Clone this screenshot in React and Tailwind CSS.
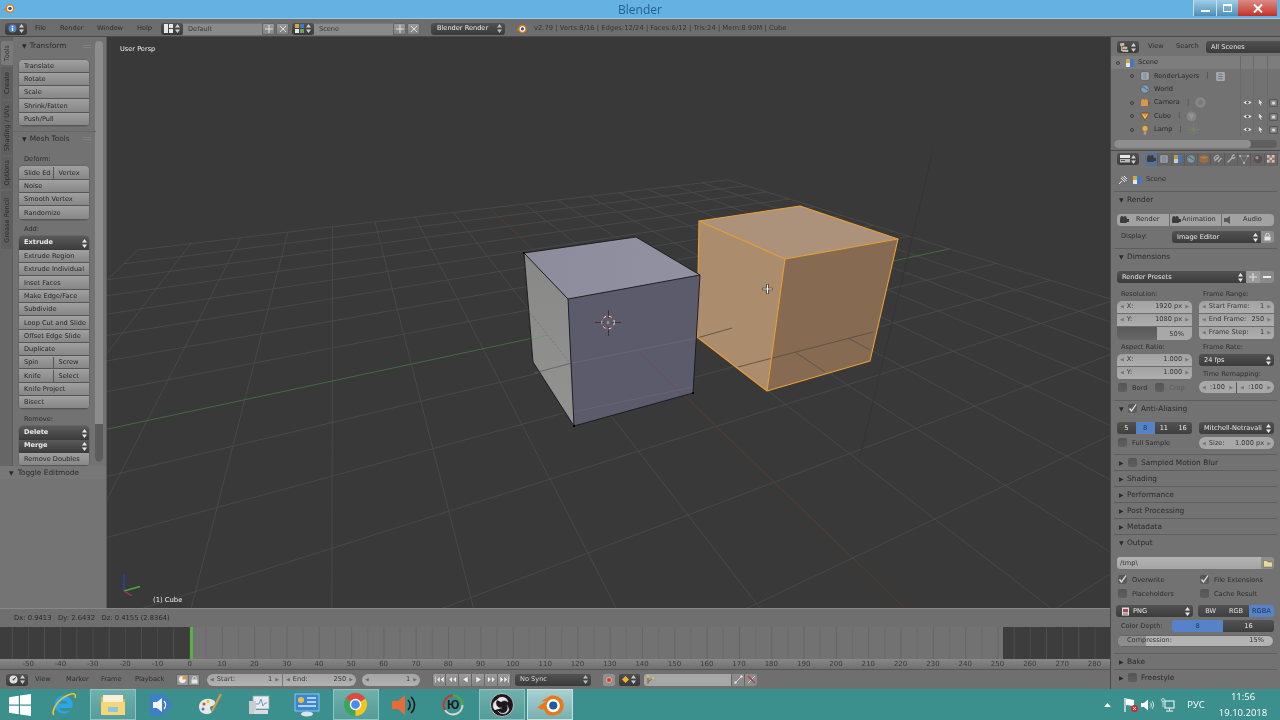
import React from "react";

const P = (u, v) => {
  const a = 0.0425 * u, b = 0.0942 * v, d = 1 + a + b;
  return [(608 + a * 1954 + b * 333) / d, (322 + a * 34 + b * 57) / d];
};
const range = [-8, -7, -6, -5, -4, -3, -2, -1, 0, 1, 2, 3, 4, 5, 6, 7, 8];
const uLine = (v) => { const s = Math.max(-8, (0.06 - 1 - 0.0942 * v) / 0.0425); return [P(s, v), P(8, v)]; };
const vLine = (u) => { const s = Math.max(-8, (0.06 - 1 - 0.0425 * u) / 0.0942); return [P(u, s), P(u, 8)]; };
const L = ({ l, c, w = 0.8 }) => <line x1={l[0][0]} y1={l[0][1]} x2={l[1][0]} y2={l[1][1]} stroke={c} strokeWidth={w} />;

function Grid({ color, w, axes }) {
  return (
    <g>
      {range.map((i) => (axes && i === 0 ? null : <L key={"v" + i} l={uLine(i)} c={color} w={w} />))}
      {range.map((i) => (axes && i === 0 ? null : <L key={"u" + i} l={vLine(i)} c={color} w={w} />))}
    </g>
  );
}

function Viewport() {
  return (
    <svg viewBox="107 37 1003 571" className="absolute inset-0 w-full h-full">
      <defs>
        <linearGradient id="gLeft" x1="0" y1="0" x2="0" y2="1"><stop offset="0" stopColor="#888887" /><stop offset="1" stopColor="#939392" /></linearGradient>
        <linearGradient id="gTop" x1="0" y1="0" x2="1" y2="0"><stop offset="0" stopColor="#8c8c9c" /><stop offset="1" stopColor="#9191a1" /></linearGradient>
      </defs>
      <Grid color="#4d4d4d" w={0.8} axes />
      <L l={[P(-8, 0), P(8, 0)]} c="#3f6d3f" w={1} />
      <L l={[P(0, -7.5), P(0, 8)]} c="#5a3b3b" w={1} />
      <line x1="933" y1="150" x2="860" y2="457" stroke="#333436" strokeWidth="0.9" />
      {/* selected cube */}
      <polygon points="699,221 785,259 767,391 697,337" fill="#ab8d6d" />
      <polygon points="785,259 898,239 870,361 767,391" fill="#866b52" />
      <polygon points="699,221 800,206 898,239 785,259" fill="#ad927b" />
      <g stroke="#5e5044" strokeWidth="0.9">
        <line x1="732" y1="328" x2="697" y2="338" />
        <line x1="873" y1="332" x2="738" y2="367" />
        <line x1="795" y1="352" x2="825" y2="372" />
        <line x1="848" y1="338" x2="870" y2="350" />
      </g>
      <g fill="none" stroke="#e9a035" strokeWidth="1.1" strokeLinejoin="round">
        <path d="M699 221 L800 206 L898 239 L785 259 Z" />
        <path d="M699 221 L697 337 L767 391 L870 361 L898 239" />
        <path d="M785 259 L767 391" />
      </g>
      {/* grey cube */}
      <polygon points="524,253 568,299 574,426 533,362" fill="url(#gLeft)" />
      <polygon points="568,299 700,275 693,393 574,426" fill="#5b5b6b" />
      <polygon points="524,253 636,237 700,275 568,299" fill="url(#gTop)" />
      <g strokeWidth="0.8">
        <line x1="534" y1="373" x2="572" y2="363" stroke="#5e5e5e" />
        <line x1="572" y1="363" x2="697" y2="338" stroke="#6a6a78" />
        <line x1="573" y1="412" x2="693" y2="387" stroke="#676775" />
        <line x1="640" y1="353" x2="680" y2="393" stroke="#6a4c58" />
        <line x1="530" y1="313" x2="570" y2="363" stroke="#6f6f6f" strokeDasharray="2 2" />
        <line x1="531" y1="340" x2="547" y2="335" stroke="#6d8f6d" />
      </g>
      <g fill="none" stroke="#17171c" strokeWidth="0.9" strokeLinejoin="round">
        <path d="M524 253 L636 237 L700 275 L568 299 Z" />
        <path d="M524 253 L533 362 L574 426 L693 393 L700 275" />
        <path d="M568 299 L574 426" />
      </g>
      <rect x="523" y="252" width="2" height="2" fill="#000" />
      <rect x="573" y="425" width="2" height="2" fill="#000" />
      <rect x="692" y="392" width="2" height="2" fill="#000" />
      {/* 3D cursor */}
      <g>
        <path d="M595 322.5 H604 M612 322.5 H621 M608.5 310 V318 M608.5 327 V336" stroke="#33333a" strokeWidth="1" />
        <circle cx="608" cy="322.5" r="6.3" fill="none" stroke="#f0e8ea" strokeWidth="1" strokeDasharray="3 3" />
        <circle cx="608" cy="322.5" r="6.3" fill="none" stroke="#b34a4a" strokeWidth="1" strokeDasharray="3 3" strokeDashoffset="3" />
        <rect x="607" y="321" width="2" height="3" fill="#a89078" />
      </g>
      {/* mouse pointer */}
      <path d="M767.5 284 V294 M762.5 289 H772.5" stroke="#3a2e22" strokeWidth="2.6" />
      <path d="M767.5 284.5 V293.5 M763 289 H772" stroke="#ffffff" strokeWidth="1.2" />
      {/* axis widget */}
      <path d="M124 591 V574" stroke="#2a3fc0" strokeWidth="1.3" />
      <path d="M124 591 L140 586.5" stroke="#4fa83a" strokeWidth="1.6" />
      <path d="M124 591 L132 596" stroke="#a83a3a" strokeWidth="1.4" />
    </svg>
  );
}

const Spin = ({ c = "#e8e8e8" }) => (
  <svg width="5" height="9" viewBox="0 0 5 9" className="shrink-0"><path d="M2.5 0 L5 3.4 H0 Z M2.5 9 L5 5.6 H0 Z" fill={c} /></svg>
);
const BlenderLogo = ({ s = 12 }) => (
  <svg width={s} height={s} viewBox="0 0 24 24" className="shrink-0">
    <path d="M1 15 L8 9.5 L4 9.5 L12 4 C18 3 23 7 23 13 C23 19 18 22 13 22 C9 22 6 19.500 6 16.500 L3.500 16.500 Z" fill="#e87d0d" />
    <circle cx="14" cy="13" r="6" fill="#ffffff" />
    <circle cx="14" cy="13" r="3.600" fill="#24588f" />
  </svg>
);

const IconBtn = ({ children, w = "w-[22px]" }) => (
  <div className={`${w} h-[12px] rounded-[3px] bg-linear-to-b from-[#525252] to-[#3a3a3a] flex items-center justify-center gap-[1.5px] shrink-0`}>
    {children}<Spin c="#cfcfcf" />
  </div>
);

const Plus = () => <svg width="8" height="8" viewBox="0 0 8 8"><path d="M4 0 V8 M0 4 H8" stroke="#dedede" strokeWidth="1.1" /></svg>;
const Cross = () => <svg width="8" height="8" viewBox="0 0 8 8"><path d="M1 1 L7 7 M7 1 L1 7" stroke="#dedede" strokeWidth="1" /></svg>;
const SmallBtn = ({ children, className = "w-[13px]" }) => (
  <div className={`${className} h-[12px] rounded-[2px] bg-linear-to-b from-[#9a9a9a] to-[#828282] border border-[#666666] flex items-center justify-center shrink-0`}>{children}</div>
);

function TitleBar() {
  return (
    <div className="h-[19px] bg-[#64b1e2] flex relative shrink-0 border-b border-[#9cc9e6]">
      <div className="pl-[3px] pt-[2px]"><BlenderLogo s={12} /></div>
      <div className="flex-1 text-center text-[#22618f] text-[12px] leading-[19px] [font-family:'Open_Sans',sans-serif] pr-[15px]">Blender</div>
      <div className="absolute right-[3px] top-0 flex h-[16px]">
        <div className="w-[23px] bg-linear-to-b from-[#9fcfe8] to-[#4d8db8] flex items-center justify-center border-l border-[#c5dff0]"><div className="w-[9px] h-[2px] mt-[5px] bg-white" /></div>
        <div className="w-[22px] bg-linear-to-b from-[#9fcfe8] to-[#4d8db8] flex items-center justify-center border-l border-[#c5dff0]"><div className="w-[9px] h-[8px] border border-white border-t-2" /></div>
        <div className="w-[39px] bg-linear-to-b from-[#d98a85] to-[#c42b22] flex items-center justify-center"><svg width="10" height="9" viewBox="0 0 10 9"><path d="M1 0.500 L9 8.500 M9 0.500 L1 8.500" stroke="#ffffff" strokeWidth="2" /></svg></div>
      </div>
    </div>
  );
}

function TopHeader() {
  return (
    <div className="h-[18px] bg-[#6d6d6d] flex items-center pt-[2px] text-[6.6px] text-[#2b2b2b] shrink-0 border-b border-[#4a4a4a]">
      <div className="ml-[5px]"><IconBtn><svg width="9" height="9" viewBox="0 0 9 9"><circle cx="4.5" cy="4.5" r="4" fill="#4f86d0" /><rect x="3.800" y="3.500" width="1.400" height="3.500" fill="#fff" /><rect x="3.800" y="1.800" width="1.400" height="1.200" fill="#fff" /></svg></IconBtn></div>
      <span className="ml-[8px] w-[25px]">File</span>
      <span className="w-[37px]">Render</span>
      <span className="w-[40px]">Window</span>
      <span className="w-[24px]">Help</span>
      <IconBtn><svg width="9" height="9" viewBox="0 0 9 9"><path d="M0 0 H4 V9 H0 Z M5 0 H9 V4 H5 Z M5 5 H9 V9 H5 Z" fill="#e8e8e8" /></svg></IconBtn>
      <div className="w-[79px] h-[12px] bg-[#8a8a8a] border-t border-[#777777] text-[#3a3a3a] pl-[5px] leading-[11px]">Default</div>
      <div className="flex gap-[1px]"><SmallBtn><Plus /></SmallBtn><SmallBtn><Cross /></SmallBtn></div>
      <div className="ml-[3px]"><IconBtn><svg width="9" height="9" viewBox="0 0 9 9"><rect x="0" y="5" width="4" height="4" fill="#e8e8e8" /><rect x="5" y="0" width="4" height="4" fill="#3f78c8" /><rect x="0" y="0" width="4" height="4" fill="#d2a640" /><rect x="5" y="5" width="4" height="4" fill="#6aa060" /></svg></IconBtn></div>
      <div className="w-[79px] h-[12px] bg-[#8a8a8a] border-t border-[#777777] text-[#3a3a3a] pl-[5px] leading-[11px]">Scene</div>
      <div className="flex gap-[1px]"><SmallBtn><Plus /></SmallBtn><SmallBtn><Cross /></SmallBtn></div>
      <div className="ml-[11px] w-[74px] h-[12px] rounded-[3px] bg-linear-to-b from-[#525252] to-[#3a3a3a] text-[#ececec] flex items-center justify-between pl-[6px] pr-[3px]">Blender Render<Spin c="#bdbdbd" /></div>
      <div className="ml-[11px]"><BlenderLogo s={11} /></div>
      <span className="ml-[7px] text-[6.8px] text-[#343434] whitespace-nowrap">v2.79 | Verts:8/16 | Edges:12/24 | Faces:6/12 | Tris:24 | Mem:8.90M | Cube</span>
    </div>
  );
}

const btnRow = "h-[13.3px] pt-px bg-linear-to-b from-[#a0a0a0] to-[#878787] border-b border-[#565656] text-[#262626] flex items-center leading-none";
function Group({ rows }) {
  return (
    <div className="w-[70px] rounded-[4px] overflow-hidden shadow-[0_0_0_0.5px_#5a5a5a]">
      {rows.map((r, i) => {
        if (Array.isArray(r)) {
          return (
            <div key={i} className={btnRow}>
              <span className="w-[34.500px] pl-[5px] border-r border-[#565656] h-full flex items-center">{r[0]}</span>
              <span className="pl-[5px]">{r[1]}</span>
            </div>
          );
        }
        if (r.startsWith("*")) {
          return (
            <div key={i} className="h-[13.3px] pt-px bg-linear-to-b from-[#5a5a5a] to-[#3e3e3e] border-b border-[#3a3a3a] text-[#ececec] font-bold flex items-center justify-between pl-[5px] pr-[2px]">
              {r.slice(1)}<Spin />
            </div>
          );
        }
        return <div key={i} className={`${btnRow} pl-[5px] whitespace-nowrap`}>{r}</div>;
      })}
    </div>
  );
}

const Grip = () => <div className="w-[8px] h-[3px] border-y border-[#808080]" />;
const Dots = () => <div className="w-[8px] h-[5px] bg-[radial-gradient(#909090_35%,transparent_40%)] bg-[length:2px_2px] shrink-0" />;

const TLabel = ({ children, className = "" }) => <div className={`h-[13px] flex items-center text-[#2c2c2c] pl-[5px] ${className}`}>{children}</div>;

function PanelTitle({ title, className }) {
  return (
    <div className={`h-[14px] flex items-center justify-between pl-[9px] pr-[5px] w-[83px] text-[7.4px] text-[#2a2a2a] ${className}`}>
      <span className="flex items-center gap-[3px]"><span className="text-[6px]">▼</span>{title}</span>
      <Grip />
    </div>
  );
}

function VTab({ children, h, active, className = "" }) {
  return (
    <div className={`w-[12px] ${h} ${active ? "bg-[#7a7a7a] text-[#333333]" : "bg-[#5f5f5f] text-[#2a2a2a]"} rounded-l-[2px] flex items-center justify-center overflow-hidden ${className}`}>
      <span className="[writing-mode:vertical-rl] rotate-180 whitespace-nowrap text-[6.6px] leading-none">{children}</span>
    </div>
  );
}

function Toolbar() {
  return (
    <div className="w-[106px] shrink-0 bg-[#727272] flex flex-col text-[6.6px]">
      <div className="h-[429px] flex overflow-hidden shrink-0">
        <div className="w-[13px] shrink-0 bg-[#666666] flex flex-col gap-[2px] pt-[4px] pl-[1px] border-r border-[#5c5c5c]">
          <VTab h="h-[24px]" active>Tools</VTab>
          <VTab h="h-[32px]">Create</VTab>
          <VTab h="h-[54px]">Shading / UVs</VTab>
          <VTab h="h-[32px]">Options</VTab>
          <VTab h="h-[58px]">Grease Pencil</VTab>
        </div>
        <div className="w-[82px] shrink-0 relative">
          <PanelTitle title="Transform" className="mt-[2px]" />
          <div className="ml-[6px] mt-[6.5px]"><Group rows={["Translate", "Rotate", "Scale", "Shrink/Fatten", "Push/Pull"]} /></div>
          <PanelTitle title="Mesh Tools" className="mt-[5px] border-t border-[#666666]" />
          <div className="ml-[6px] mt-[8.5px]">
            <TLabel>Deform:</TLabel>
            <Group rows={[["Slide Ed", "Vertex"], "Noise", "Smooth Vertex", "Randomize"]} />
            <TLabel className="mt-[3.8px]">Add:</TLabel>
            <Group rows={["*Extrude", "Extrude Region", "Extrude Individual", "Inset Faces", "Make Edge/Face", "Subdivide", "Loop Cut and Slide", "Offset Edge Slide", "Duplicate", ["Spin", "Screw"], ["Knife", "Select"], "Knife Project", "Bisect"]} />
            <TLabel className="mt-[4.1px]">Remove:</TLabel>
            <Group rows={["*Delete", "*Merge", "Remove Doubles"]} />
          </div>
        </div>
        <div className="w-[8px] mt-[4px] mb-[4px] ml-[0px] rounded-full bg-[#8d8d8d] flex flex-col justify-end overflow-hidden shrink-0">
          <div className="h-[38px] bg-[#5d5d5d] rounded-b-full" />
        </div>
      </div>
      <div className="h-[13px] flex items-center justify-between pl-[9px] pr-[7px] text-[7.4px] text-[#2a2a2a] bg-[#777777] shrink-0">
        <span className="flex items-center gap-[4px]"><span className="text-[6px]">▼</span>Toggle Editmode</span>
        <Dots />
      </div>
      <div className="flex-1 bg-[#747474]" />
    </div>
  );
}

const Ticks = () => {
  const xs = [];
  for (let f = -55; f <= 285; f += 5) xs.push(f);
  return (
    <svg viewBox="0 0 1110 32" className="absolute inset-0 w-full h-full">
      {xs.map((f) => {
        const x = 190 + f * 3.232;
        return <line key={f} x1={x} x2={x} y1="0" y2="32" stroke={f % 10 === 0 ? "#5a5a5a" : "#666666"} strokeOpacity="0.5" strokeWidth="1" />;
      })}
    </svg>
  );
};

const labels = [];
for (let f = -50; f <= 280; f += 10) labels.push(f);

const Fld = ({ children, w, className = "" }) => (
  <div className={`${w} h-[12px] bg-linear-to-b from-[#a4a4a4] to-[#b2b2b2] flex items-center justify-between px-[3px] text-[#3a3a3a] shrink-0 ${className}`}>
    <span className="text-[#6e6e6e] text-[5px]">◀</span>{children}<span className="text-[#6e6e6e] text-[5px]">▶</span>
  </div>
);

const Tr = ({ d }) => (
  <div className="w-[13px] h-[12px] bg-linear-to-b from-[#9b9b9b] to-[#858585] border-r border-[#666666] flex items-center justify-center">
    <svg width="9" height="7" viewBox="0 0 9 7"><path d={d} fill="#eeeeee" stroke="#555555" strokeWidth="0.4" /></svg>
  </div>
);

function TimelineHeader() {
  return (
    <div className="h-[19px] bg-[#6f6f6f] flex items-center text-[6.6px] text-[#2c2c2c]">
      <div className="ml-[6px]"><IconBtn><svg width="9" height="9" viewBox="0 0 9 9"><circle cx="4.500" cy="4.500" r="4" fill="#e0e0e0" /><path d="M4.500 4.500 L7 2.500" stroke="#333" strokeWidth="1" /><circle cx="4.500" cy="4.500" r="1" fill="#555" /></svg></IconBtn></div>
      <span className="ml-[6px] w-[34px] pl-[1px]">View</span>
      <span className="w-[36px] ml-[-3px] pl-[1px]">Marker</span>
      <span className="w-[34px]">Frame</span>
      <span className="w-[38px]">Playback</span>
      <div className="ml-[3px] flex">
        <div className="w-[13px] h-[12px] rounded-l-[2px] bg-[#9a9a9a] border border-[#666666] flex items-center justify-center"><svg width="9" height="9" viewBox="0 0 9 9"><circle cx="4.500" cy="4.500" r="4" fill="#f2f2f2" stroke="#666" strokeWidth="0.5" /><path d="M4.500 4.500 V0.500 A4 4 0 0 1 8.500 4.500 Z" fill="#e09a3a" /></svg></div>
        <div className="w-[11px] h-[12px] rounded-r-[2px] bg-[#949494] border-y border-r border-[#666666] flex items-center justify-center"><svg width="7" height="8" viewBox="0 0 7 8"><rect x="0.500" y="3.500" width="6" height="4" fill="#e6e6e6" /><path d="M1.800 3.500 V2 A1.700 1.700 0 0 1 5.200 2 V3.500" fill="none" stroke="#e6e6e6" strokeWidth="0.9" /></svg></div>
      </div>
      <div className="ml-[7px] flex">
        <Fld w="w-[76px]" className="rounded-l-full border-r border-[#777777]"><span className="flex-1 flex justify-between px-[3px]"><span>Start:</span><span>1</span></span></Fld>
        <Fld w="w-[73px]" className="rounded-r-full"><span className="flex-1 flex justify-between px-[3px]"><span>End:</span><span>250</span></span></Fld>
      </div>
      <Fld w="w-[58px]" className="ml-[6px] rounded-full"><span className="flex-1 text-right pr-[3px]">1</span></Fld>
      <div className="ml-[12px] flex rounded-[2px] overflow-hidden border-l border-[#666666]">
        <Tr d="M0 0 H1.500 V7 H0 Z M5 0 V7 L1.800 3.500 Z M9 0 V7 L5.500 3.500 Z" />
        <Tr d="M4.500 0 V7 L1 3.500 Z M8.500 0 V7 L5 3.500 Z" />
        <Tr d="M7 0 V7 L1.500 3.500 Z" />
        <Tr d="M2 0 V7 L7.500 3.500 Z" />
        <Tr d="M0.500 0 V7 L4 3.500 Z M4.500 0 V7 L8 3.500 Z" />
        <Tr d="M0 0 V7 L3.500 3.500 Z M4 0 V7 L7.500 3.500 Z M7.500 0 H9 V7 H7.500 Z" />
      </div>
      <div className="ml-[4px] w-[76px] h-[12px] rounded-[3px] bg-linear-to-b from-[#525252] to-[#3a3a3a] text-[#d8d8d8] flex items-center justify-between pl-[5px] pr-[3px]">No Sync<Spin c="#bdbdbd" /></div>
      <div className="ml-[12px] w-[12px] h-[12px] rounded-[2px] bg-[#8f8f8f] flex items-center justify-center"><div className="w-[6px] h-[6px] rounded-full bg-[#c8402a] border border-[#eeb0a0]" /></div>
      <div className="ml-[4px] w-[21px] h-[12px] rounded-[2px] bg-linear-to-b from-[#4e4e4e] to-[#383838] flex items-center justify-center gap-[3px]"><div className="w-[5px] h-[5px] rotate-45 bg-[#efb42e]" /><Spin c="#cfcfcf" /></div>
      <div className="ml-[4px] w-[87px] h-[12px] bg-[#a6a6a6] rounded-l-[3px] flex items-center pl-[2px]"><svg width="9" height="10" viewBox="0 0 9 10"><path d="M2 1 V9 M2 7 L7 3" stroke="#7a6a20" strokeWidth="1" fill="none" /><circle cx="2" cy="1.500" r="1.200" fill="#d8c860" /><circle cx="7" cy="3" r="1.200" fill="#d8c860" /></svg></div>
      <div className="w-[13px] h-[12px] bg-[#8b8b8b] border-l border-[#666666] flex items-center justify-center"><svg width="9" height="9" viewBox="0 0 9 9"><path d="M1 8 L8 1" stroke="#e2e2e2" strokeWidth="0.8" /><circle cx="1.500" cy="7.500" r="1.200" fill="#e2e2e2" /><circle cx="7.500" cy="1.500" r="1.200" fill="#e2e2e2" /></svg></div>
      <div className="w-[13px] h-[12px] bg-[#8b8b8b] rounded-r-[3px] border-l border-[#666666] flex items-center justify-center"><svg width="9" height="9" viewBox="0 0 9 9"><path d="M1 8 L8 1" stroke="#e2e2e2" strokeWidth="0.8" /><path d="M1 1 L8 8" stroke="#b83a3a" strokeWidth="1.100" /></svg></div>
    </div>
  );
}

function Timeline() {
  return (
    <>
      <div className="h-[32px] flex relative shrink-0">
        <div className="w-[190px] bg-[#3d3d3d]" />
        <div className="w-[813px] bg-[#727272]" />
        <div className="flex-1 bg-[#3d3d3d]" />
        <Ticks />
        <div className="absolute left-[189.500px] top-0 w-[3px] h-full bg-[#57b33f]" />
      </div>
      <div className="h-[11px] bg-linear-to-b from-[#888888] to-[#6f6f6f] border-b border-[#565656] flex items-center text-[7px] text-[#3a3a3a] overflow-hidden shrink-0 pl-[12px]">
        {labels.map((f) => <div key={f} className="w-[32.32px] text-center shrink-0">{f}</div>)}
      </div>
      <TimelineHeader />
    </>
  );
}

const Ico = ({ children, s = 10 }) => <svg width={s} height={s} viewBox="0 0 10 10" className="shrink-0">{children}</svg>;
const SceneIco = () => <Ico><rect x="1" y="5" width="4" height="4" fill="#e6e6e6" /><rect x="5" y="1" width="4" height="4" fill="#3f78c8" /><rect x="1" y="1" width="4" height="4" fill="#d2a640" /><rect x="5" y="5" width="4" height="4" fill="#3f78c8" /></Ico>;
const LayersIco = () => <Ico><rect x="1" y="1" width="8" height="8" rx="1" fill="#bcbcbc" stroke="#555" strokeWidth="0.6" /><path d="M2.500 3 H7.500 M2.500 5 H7.500 M2.500 7 H7.500" stroke="#4f6f98" strokeWidth="0.9" /></Ico>;
const WorldIco = () => <Ico><circle cx="5" cy="5" r="4.200" fill="#7f9fb8" stroke="#444" strokeWidth="0.5" /><path d="M2 4 Q4 2 5 4 T8 6" stroke="#4e6e5e" strokeWidth="1" fill="none" /></Ico>;
const CamIco = ({ g, d }) => {
  const c = d ? "#3c3c3c" : g ? "#8a8a8a" : "#d89a48";
  return <Ico><rect x="1" y="3" width="7" height="5" rx="1" fill={c} /><circle cx="3" cy="2.500" r="1.600" fill={c} /><circle cx="6" cy="2.500" r="1.600" fill={c} /><rect x="8" y="4" width="2" height="3" fill={g || d ? c : "#8a5a28"} /></Ico>;
};
const CubeIco = () => <Ico><path d="M0.500 2 H9.500 L5 9.500 Z" fill="#d8913a" stroke="#6b4518" strokeWidth="0.6" /><path d="M3 3.500 L5 7 L7 3.500" stroke="#f4dcae" strokeWidth="0.7" fill="none" /></Ico>;
const LampIco = () => <Ico><circle cx="5" cy="3.500" r="3" fill="#e2b050" stroke="#7a5a20" strokeWidth="0.5" /><rect x="3.800" y="6.500" width="2.400" height="3" fill="#aaa39a" /></Ico>;
const GhostIco = ({ children }) => <svg width="11" height="11" viewBox="0 0 10 10" className="shrink-0 opacity-70">{children}</svg>;
const Eye = () => <Ico s={9}><path d="M0.500 5 Q5 1 9.500 5 Q5 9 0.500 5 Z" fill="#e8e8e8" /><circle cx="5" cy="5" r="1.500" fill="#444" /></Ico>;
const Cursor = () => <Ico s={9}><path d="M3 1 L8 6 L5.500 6 L6.500 9 L5 9 L4 6.500 L3 8 Z" fill="#e6e6e6" stroke="#444" strokeWidth="0.4" /></Ico>;
const Rnd = () => <Ico s={9}><rect x="1" y="2" width="8" height="7" fill="#8f8f8f" stroke="#333" strokeWidth="0.7" /><circle cx="5" cy="5.500" r="1.700" fill="#dddddd" /></Ico>;

function ORow({ level, icon, text, extra, vis, active }) {
  return (
    <div className={`h-[13.4px] flex ${active ? "bg-[#7d7d7d]" : ""}`}>
      <div className="w-[129px] flex items-center shrink-0">
        <div className={`${level ? "ml-[19px]" : "ml-[5px]"} w-[4px] h-[4px] rounded-full border border-[#3c3c3c] shrink-0`} />
        <div className={level ? "ml-[6px]" : "ml-[5px]"}>{icon}</div>
        <span className={`pt-px ${level ? "ml-[4px]" : "ml-[3px]"} ${active ? "text-[#262626]" : "text-[#2a2a2a]"}`}>{text}</span>
        {extra && <><span className="ml-[7px] text-[#444444]">|</span><span className="ml-[6px]">{extra}</span></>}
      </div>
      {[0, 1, 2].map((i) => (
        <div key={i} className="w-[13.400px] border-l border-[#6a6a6a] flex items-center justify-center">
          {vis && (i === 0 ? <Eye /> : i === 1 ? <Cursor /> : <Rnd />)}
        </div>
      ))}
    </div>
  );
}

function Outliner() {
  return (
    <div className="bg-[#727272]">
      <div className="h-[19px] pt-[1px] flex items-center text-[6.6px] text-[#2c2c2c] relative">
        <div className="ml-[6px]"><IconBtn><svg width="9" height="9" viewBox="0 0 9 9"><path d="M0.500 0.500 H4 V2.500 H0.500 Z M3 4 H7 V5.500 H3 Z M3 7 H8 V8.500 H3 Z M1.500 2.500 V8 H3 M1.500 5 H3" fill="#d8a860" stroke="#e8e8e8" strokeWidth="0.5" /></svg></IconBtn></div>
        <span className="ml-[9px] w-[28px]">View</span>
        <span className="w-[20px]">Search</span>
        <div className="ml-[10px] flex-1 h-[12px] rounded-l-[3px] bg-linear-to-b from-[#505050] to-[#3c3c3c] text-[#e8e8e8] pl-[5px] leading-[12px]">All Scenes</div>
      </div>
      <div className="h-[81px] text-[6.6px]">
        <ORow level={0} active icon={<SceneIco />} text="Scene" />
        <ORow level={1} icon={<LayersIco />} text="RenderLayers" extra={<GhostIco><rect x="1" y="1" width="8" height="8" rx="1" fill="#c0c0c0" /><path d="M3 3 H7 M3 5 H7 M3 7 H7" stroke="#5878a0" /></GhostIco>} />
        <div className="h-[13.4px] flex"><div className="w-[129px] flex items-center"><div className="ml-[29px]"><WorldIco /></div><span className="pt-px ml-[4px] text-[#2a2a2a]">World</span></div>{[0, 1, 2].map((i) => <div key={i} className="w-[13.400px] border-l border-[#6a6a6a]" />)}</div>
        <ORow level={1} icon={<CamIco />} text="Camera" vis extra={<GhostIco><circle cx="5" cy="5" r="4" fill="#8a8a8a" stroke="#9a9a9a" /><circle cx="5" cy="5" r="1.800" fill="#7a7a7a" /></GhostIco>} />
        <ORow level={1} icon={<CubeIco />} text="Cube" vis extra={<GhostIco><circle cx="5" cy="5" r="4.500" fill="#8e8e8e" /><path d="M2.500 3 H7.500 L5 8 Z" fill="#a5a5a5" /></GhostIco>} />
        <ORow level={1} icon={<LampIco />} text="Lamp" vis extra={<GhostIco><circle cx="5" cy="5" r="2" fill="#7f8a5a" /><path d="M5 0 V2 M5 8 V10 M0 5 H2 M8 5 H10 M1.500 1.500 L3 3 M7 7 L8.500 8.500 M8.500 1.500 L7 3 M3 7 L1.500 8.500" stroke="#80906a" strokeWidth="0.8" /></GhostIco>} />
      </div>
      <div className="h-[13px] flex items-center justify-center">
        <div className="w-[163px] h-[8px] rounded-full bg-[#5f5f5f] overflow-hidden"><div className="w-[137px] h-full rounded-full bg-[#8e8e8e]" /></div>
      </div>
    </div>
  );
}

const H = ({ children, active }) => (
  <div className={`w-[13.3px] h-[13px] flex items-center justify-center shrink-0 ${active ? "bg-[#53739a]" : "bg-[#666666]"} border-r border-[#5c5c5c]`}><div className={active ? "" : "opacity-80"}>{children}</div></div>
);

function PropsHeader() {
  return (
    <div className="h-[17px] flex items-center bg-[#727272] border-t border-[#4a4a4a] shrink-0">
      <div className="ml-[6px]"><IconBtn><svg width="10" height="8" viewBox="0 0 10 8"><rect x="0" y="0" width="10" height="3" fill="#e8e8e8" /><rect x="0" y="4" width="10" height="3.500" fill="#b8b8b8" /><rect x="1" y="5" width="4" height="1" fill="#555" /></svg></IconBtn></div>
      <div className="ml-[6px] flex rounded-[2px] overflow-hidden">
        <H active><CamIco d /></H>
        <H><LayersIco /></H>
        <H><SceneIco /></H>
        <H><WorldIco /></H>
        <H><Ico><path d="M5 0.500 L9.500 2.800 V7.400 L5 9.600 L0.500 7.400 V2.800 Z" fill="#a87038" /><path d="M0.500 2.800 L5 5 L9.500 2.800" fill="#c28a50" /></Ico></H>
        <H><Ico><path d="M1.500 7 L5 3 M5 8 L8.500 4" stroke="#bdbdbd" strokeWidth="1.200" fill="none" /><rect x="1" y="2" width="5" height="3" rx="1.500" fill="none" stroke="#bdbdbd" transform="rotate(-40 3.500 3.500)" /></Ico></H>
        <H><Ico><path d="M1.500 8.500 L6 4 M8.500 1 A2.500 2.500 0 0 0 6 4 A2 2 0 0 0 9 3" stroke="#c8c8c8" strokeWidth="1.300" fill="none" /></Ico></H>
        <H><Ico><path d="M1 2 H9 L5 9 Z" fill="none" stroke="#9a9a9a" strokeWidth="0.800" /><circle cx="1" cy="2" r="0.900" fill="#d8d8d8" /><circle cx="9" cy="2" r="0.900" fill="#d8d8d8" /><circle cx="5" cy="9" r="0.900" fill="#d8d8d8" /></Ico></H>
        <H><Ico><circle cx="5" cy="5" r="4" fill="#5b4a48" /><circle cx="4" cy="3.800" r="1.700" fill="#a79a98" /></Ico></H>
        <H><Ico><rect x="1" y="1" width="8" height="8" fill="#ab7c6a" /><path d="M1 1 H3.500 V3.500 H1 Z M6 1 H8.500 V3.500 H6 Z M3.500 3.500 H6 V6 H3.500 Z M1 6 H3.500 V8.500 H1 Z M6 6 H8.500 V8.500 H6 Z" fill="#e4d8d2" /></Ico></H>
      </div>
    </div>
  );
}

const Tri = ({ open }) => <span className="text-[6px] text-[#2a2a2a] w-[8px] shrink-0">{open ? "▼" : "▶"}</span>;
const Check = ({ on }) => (
  <div className="w-[9px] h-[9px] rounded-[2px] bg-linear-to-b from-[#555555] to-[#5f5f5f] flex items-center justify-center shrink-0">
    {on && <svg width="9" height="9" viewBox="0 0 9 9"><path d="M1.500 4.500 L3.500 7 L8 0.500" stroke="#e8e8e8" strokeWidth="1.300" fill="none" /></svg>}
  </div>
);

function PTitle({ title, open, check, on }) {
  return (
    <div className="mx-[3px] h-[16px] border-t border-[#5e5e5e] flex items-center pl-[5px] pr-[3px] text-[7.4px] text-[#2a2a2a] shrink-0">
      <Tri open={open} />
      {check && <span className="mr-[4px] ml-[1px]"><Check on={on} /></span>}
      <span className="flex-1">{title}</span>
      <Dots />
    </div>
  );
}

const Dark = ({ children, className = "" }) => (
  <div className={`h-[12px] rounded-[3px] bg-linear-to-b from-[#525252] to-[#3c3c3c] text-[#e8e8e8] flex items-center justify-between pl-[5px] pr-[3px] ${className}`}><span className="pt-px">{children}</span><Spin /></div>
);
const NumRow = ({ l, v, className = "" }) => (
  <div className={`h-[13px] pt-px bg-linear-to-b from-[#a2a2a2] to-[#aeaeae] border-b border-[#6c6c6c] flex items-center justify-between px-[3px] text-[#363636] ${className}`}>
    <span className="text-[#777777] text-[5px]">◀</span>
    <span className="flex-1 flex justify-between px-[3px] whitespace-nowrap"><span>{l}</span><span>{v}</span></span>
    <span className="text-[#777777] text-[5px]">▶</span>
  </div>
);
const FLabel = ({ children, className = "" }) => <div className={`h-[12px] pt-px flex items-center pl-[4px] text-[#2e2e2e] ${className}`}>{children}</div>;
const CheckLabel = ({ on, children, dim }) => (
  <div className={`flex items-center gap-[5px] ${dim ? "text-[#5c5c5c]" : "text-[#2c2c2c]"}`}><Check on={on} /><span className="pt-px">{children}</span></div>
);

function Properties() {
  return (
    <div className="flex-1 bg-[#727272] text-[6.6px] text-[#2c2c2c] flex flex-col overflow-hidden">
      <div className="h-[24px] flex items-center pl-[7px] pt-[2px] shrink-0">
        <Ico><path d="M1 9 L4 6 M3 3 L7 7 M4 1.500 L8.500 6 M6 1 L9 4" stroke="#e6e6e6" strokeWidth="1" /></Ico>
        <span className="ml-[4px]"><SceneIco /></span>
        <span className="ml-[1px] pl-[3px] text-[#2e2e2e]">Scene</span>
      </div>

      <PTitle title="Render" open />
      <div className="h-[41px] px-[6px] shrink-0">
        <div className="mt-[7px] h-[12px] flex rounded-[4px] overflow-hidden bg-[#a2a2a2] text-[#2a2a2a]">
          <div className="w-[53px] flex items-center pl-[2px] border-r border-[#6c6c6c]"><CamIco d /><span className="ml-[7px]">Render</span></div>
          <div className="w-[52px] flex items-center pl-[1px] border-r border-[#6c6c6c]"><CamIco d /><span className="ml-[1px]">Animation</span></div>
          <div className="flex-1 flex items-center pl-[1px]"><Ico><path d="M1 3 H4 L7 1 V9 L4 7 H1 Z" fill="#5a5a5a" /></Ico><span className="ml-[10px]">Audio</span></div>
        </div>
        <div className="mt-[5px] h-[12px] flex items-center">
          <span className="w-[55px] pl-[4px] text-[#2e2e2e]">Display:</span>
          <Dark className="w-[89px] rounded-r-none">Image Editor</Dark>
          <div className="flex-1 h-[12px] bg-[#8d8d8d] rounded-r-[3px] flex items-center justify-center"><svg width="7" height="8" viewBox="0 0 7 8"><rect x="0.500" y="3.500" width="6" height="4" fill="#e6e6e6" /><path d="M1.800 3.500 V2 A1.700 1.700 0 0 1 5.200 2 V3.500" fill="none" stroke="#e6e6e6" strokeWidth="0.9" /></svg></div>
        </div>
      </div>

      <PTitle title="Dimensions" open />
      <div className="h-[136px] px-[6px] shrink-0">
        <div className="mt-[7px] h-[12px] flex">
          <Dark className="w-[129px] rounded-r-none">Render Presets</Dark>
          <div className="w-[14px] bg-[#9a9a9a] flex items-center justify-center"><Plus /></div>
          <div className="flex-1 bg-[#8a8a8a] rounded-r-[3px] flex items-center justify-center"><div className="w-[8px] h-[1.500px] bg-[#ececec]" /></div>
        </div>
        <div className="mt-[5px] flex justify-between">
          <div className="w-[75px]">
            <FLabel>Resolution:</FLabel>
            <div className="mt-[0.5px] rounded-[5px] overflow-hidden">
              <NumRow l="X:" v="1920 px" />
              <NumRow l="Y:" v="1080 px" />
              <div className="h-[13px] flex text-[#363636]"><div className="w-[40px] bg-linear-to-b from-[#5a5a5a] to-[#686868]" /><div className="flex-1 bg-[#a8a8a8] text-right pr-[8px] leading-[14px]">50%</div></div>
            </div>
            <FLabel className="mt-[1.5px]">Aspect Ratio:</FLabel>
            <div className="mt-[0.5px] rounded-[5px] overflow-hidden">
              <NumRow l="X:" v="1.000" />
              <NumRow l="Y:" v="1.000" />
            </div>
            <div className="mt-[2.5px] h-[12px] flex items-center gap-[8px] pl-[1px]">
              <CheckLabel>Bord</CheckLabel>
              <CheckLabel dim>Crop</CheckLabel>
            </div>
          </div>
          <div className="w-[75px]">
            <FLabel>Frame Range:</FLabel>
            <div className="mt-[0.5px] rounded-[5px] overflow-hidden">
              <NumRow l="Start Frame:" v="1" />
              <NumRow l="End Frame:" v="250" />
              <NumRow l="Frame Step:" v="1" />
            </div>
            <FLabel className="mt-[1.5px]">Frame Rate:</FLabel>
            <Dark className="mt-[1px]">24 fps</Dark>
            <FLabel className="mt-[2px]">Time Remapping:</FLabel>
            <div className="mt-[1px] h-[12px] pt-px flex rounded-full overflow-hidden bg-[#a8a8a8] text-[#363636]">
              <div className="flex-1 flex items-center justify-between px-[3px] border-r border-[#555555]"><span className="text-[#777777] text-[5px]">◀</span>:100<span className="text-[#777777] text-[5px]">▶</span></div>
              <div className="flex-1 flex items-center justify-between px-[3px]"><span className="text-[#777777] text-[5px]">◀</span>:100<span className="text-[#777777] text-[5px]">▶</span></div>
            </div>
          </div>
        </div>
      </div>

      <PTitle title="Anti-Aliasing" open check on />
      <div className="h-[38px] px-[6px] shrink-0">
        <div className="mt-[6px] h-[12px] flex justify-between">
          <div className="w-[75px] grid grid-cols-4 rounded-[3px] overflow-hidden text-center leading-[13px]">
            <div className="bg-linear-to-b from-[#525252] to-[#3e3e3e] text-[#e8e8e8]">5</div>
            <div className="bg-[#5682c8] text-[#1f2f55]">8</div>
            <div className="bg-linear-to-b from-[#525252] to-[#3e3e3e] text-[#e8e8e8]">11</div>
            <div className="bg-linear-to-b from-[#525252] to-[#3e3e3e] text-[#e8e8e8]">16</div>
          </div>
          <Dark className="w-[75px] whitespace-nowrap pl-[5px]">Mitchell-Netravali</Dark>
        </div>
        <div className="mt-[3px] h-[12px] flex justify-between items-center">
          <div className="w-[75px] pl-[1px]"><CheckLabel>Full Sample</CheckLabel></div>
          <div className="w-[75px] h-[12px] pt-px rounded-full bg-[#a8a8a8] flex items-center justify-between px-[3px] text-[#363636]"><span className="text-[#777777] text-[5px]">◀</span><span className="flex-1 flex justify-between px-[3px]"><span>Size:</span><span>1.000 px</span></span><span className="text-[#777777] text-[5px]">▶</span></div>
        </div>
      </div>

      <PTitle title="Sampled Motion Blur" check />
      <PTitle title="Shading" />
      <PTitle title="Performance" />
      <PTitle title="Post Processing" />
      <PTitle title="Metadata" />
      <PTitle title="Output" open />
      <div className="h-[103px] px-[6px] shrink-0">
        <div className="mt-[7px] h-[12px] flex">
          <div className="flex-1 bg-linear-to-b from-[#b4b4b4] to-[#a4a4a4] rounded-l-[3px] pl-[3px] leading-[13px] text-[#2e2e2e]">/tmp\</div>
          <div className="w-[13px] bg-[#8f8f8f] rounded-r-[3px] flex items-center justify-center"><svg width="10" height="9" viewBox="0 0 10 9"><path d="M0.500 8 V1.500 H4 L5 3 H9.500 V8 Z" fill="#e6d8a0" stroke="#6a6030" strokeWidth="0.5" /></svg></div>
        </div>
        <div className="mt-[5px] h-[12px] flex items-center pl-[1px]"><div className="w-[82px]"><CheckLabel on>Overwrite</CheckLabel></div><CheckLabel on>File Extensions</CheckLabel></div>
        <div className="mt-[2px] h-[12px] flex items-center pl-[1px]"><div className="w-[82px]"><CheckLabel>Placeholders</CheckLabel></div><CheckLabel>Cache Result</CheckLabel></div>
        <div className="mt-[5px] h-[12px] flex justify-between">
          <Dark className="w-[77px] -ml-[1px] pl-[3px]"><span className="flex items-center gap-[3px]"><svg width="9" height="9" viewBox="0 0 9 9"><rect x="1" y="0.500" width="7" height="8" fill="#e8e0e0" /><rect x="2" y="2" width="5" height="3" fill="#b04a5a" /><path d="M2 6 H7 M2 7.300 H7" stroke="#555" strokeWidth="0.6" /></svg>PNG</span></Dark>
          <div className="w-[76px] grid grid-cols-3 rounded-[3px] overflow-hidden text-center leading-[13px] text-[#e0e0e0]">
            <div className="bg-linear-to-b from-[#525252] to-[#3e3e3e]">BW</div>
            <div className="bg-linear-to-b from-[#525252] to-[#3e3e3e]">RGB</div>
            <div className="bg-[#5682c8] text-[#1f2f55]">RGBA</div>
          </div>
        </div>
        <div className="mt-[3px] h-[12px] flex items-center">
          <span className="w-[55px] pl-[4px] pt-px text-[#2e2e2e]">Color Depth:</span>
          <div className="flex-1 h-[12px] flex rounded-[3px] overflow-hidden text-center leading-[13px]">
            <div className="w-[51px] bg-[#5682c8] text-[#1f2f55]">8</div>
            <div className="flex-1 bg-linear-to-b from-[#525252] to-[#3e3e3e] text-[#e8e8e8]">16</div>
          </div>
        </div>
        <div className="mt-[2.5px] h-[12px] rounded-full overflow-hidden flex relative bg-[#b4b4b4] border border-[#666666]">
          <div className="w-[28px] bg-[#8c8c8c]" />
          <div className="absolute inset-0 pt-px flex items-center justify-between pl-[9px] pr-[9px] text-[#363636]"><span>Compression:</span><span>15%</span></div>
        </div>
      </div>
      <PTitle title="Bake" />
      <PTitle title="Freestyle" check />
    </div>
  );
}

function RightCol() {
  return (
    <div className="w-[170px] shrink-0 border-l border-[#4a4a4a] flex flex-col bg-[#727272]">
      <Outliner />
      <PropsHeader />
      <Properties />
    </div>
  );
}

const Slot = ({ children, active, strong }) => (
  <div className={`w-[48.6px] h-full shrink-0 flex items-center justify-center ${active ? "px-[1.4px]" : ""}`}>
    <div className={`w-full h-full flex items-center justify-center ${strong ? "bg-linear-to-b from-[#a9d0d0] to-[#78b0b0] border border-[#c4e0e0]" : active ? "bg-linear-to-b from-[#6fb0ae] to-[#559c9a] border border-[#8cc4c2]" : ""}`}>{children}</div>
  </div>
);

function Taskbar() {
  return (
    <div className="h-[31px] bg-[#3b8f8c] flex items-stretch shrink-0 text-white [font-family:'Open_Sans',sans-serif]">
      <div className="w-[40px] shrink-0 flex items-center justify-center">
        <svg width="22" height="22" viewBox="0 0 22 22"><path d="M0 3.200 L9.800 1.800 V10.500 H0 Z M11 1.600 L22 0 V10.500 H11 Z M0 11.700 H9.800 V20.200 L0 18.800 Z M11 11.700 H22 V22 L11 20.400 Z" fill="#ffffff" /></svg>
      </div>
      <Slot><svg width="26" height="26" viewBox="0 0 26 26"><path d="M7 16 H21 A9 9 0 1 0 19 19 H15 A5 5 0 0 1 8 16 Z M8 11.500 A5 5 0 0 1 17 11.500 Z" fill="#2ba6e8" fillRule="evenodd" /><path d="M3 23 C0 20 6 6 20 2 C24 1 25 3 24 6" fill="none" stroke="#f2c230" strokeWidth="1.500" /></svg></Slot>
      <Slot active><svg width="26" height="24" viewBox="0 0 26 24"><path d="M1 4 H10 L12 6 H25 V22 H1 Z" fill="#e4b64a" /><rect x="3" y="2" width="20" height="7" fill="#f6f0d8" /><rect x="1" y="9" width="24" height="13" fill="#f5d77a" /><rect x="8" y="14" width="10" height="5" fill="#8dc6e2" /></svg></Slot>
      <Slot><svg width="26" height="24" viewBox="0 0 26 24"><path d="M2 1 H15 L25 12 L15 23 H2 Z" fill="#3f7fc6" /><path d="M5 9 H9 L14 5 V19 L9 15 H5 Z" fill="#f2f6fa" /><path d="M16 8 A6 6 0 0 1 16 16" fill="none" stroke="#f2f6fa" strokeWidth="1.300" /></svg></Slot>
      <Slot><svg width="26" height="26" viewBox="0 0 26 26"><path d="M2 15 C2 8 10 5 16 8 C20 10 18 14 15 14 C12 14 13 18 15 20 C11 24 2 22 2 15 Z" fill="#e9e9e4" /><circle cx="7" cy="12" r="1.500" fill="#d84a3a" /><circle cx="11" cy="9.500" r="1.500" fill="#e8c030" /><circle cx="6" cy="17" r="1.500" fill="#3a7ad8" /><path d="M15 19 L24 2" stroke="#d89a50" strokeWidth="2.200" /></svg></Slot>
      <Slot><svg width="26" height="24" viewBox="0 0 26 24"><rect x="7" y="3" width="16" height="13" fill="#e8ecee" stroke="#9aa0a4" strokeWidth="0.800" /><path d="M9 11 L13 11 L15 6 L17 13 L19 10 L21 10" stroke="#5a88b8" fill="none" strokeWidth="0.800" /><rect x="3" y="8" width="7" height="13" fill="#c9cdcf" /><rect x="8" y="17" width="14" height="4" fill="#dadddf" /></svg></Slot>
      <Slot><svg width="26" height="24" viewBox="0 0 26 24"><rect x="1" y="1" width="24" height="17" fill="#3a86d6" stroke="#a8d0f0" strokeWidth="0.800" /><circle cx="7" cy="7" r="3" fill="#f0c040" /><path d="M13 5 H22 M13 9 H22 M4 13 H22" stroke="#dcecfa" strokeWidth="1.600" /><ellipse cx="13" cy="21" rx="6" ry="2.500" fill="#dfe6ea" /></svg></Slot>
      <Slot active><svg width="25" height="25" viewBox="0 0 24 24"><path d="M12 12 L2.470 6.500 A11 11 0 0 1 21.530 6.500 Z" fill="#dd4b3e" /><path d="M12 12 L2.470 6.500 A11 11 0 0 0 12 23 Z" fill="#3aa757" /><path d="M12 12 L21.530 6.500 A11 11 0 0 1 12 23 Z" fill="#f5c518" /><circle cx="12" cy="12" r="5.500" fill="#ffffff" /><circle cx="12" cy="12" r="4.200" fill="#4a8bf0" /></svg></Slot>
      <Slot><svg width="24" height="26" viewBox="0 0 24 26"><path d="M0 9 H6 L13 3 V23 L6 17 H0 Z" fill="#e86a38" /><path d="M16 8 A7 7 0 0 1 16 18 M19 5 A11 11 0 0 1 19 21" fill="none" stroke="#1a1a1a" strokeWidth="1.600" /></svg></Slot>
      <Slot>
        <div className="relative w-[22px] h-[22px] flex items-center justify-center">
          <svg width="22" height="22" viewBox="0 0 22 22" className="absolute inset-0"><path d="M11 1.500 A9.500 9.500 0 0 1 20.500 11" fill="none" stroke="#58a83a" strokeWidth="2" /><path d="M20.500 11 A9.500 9.500 0 0 1 3 16" fill="none" stroke="#d8d8d8" strokeWidth="2" /><path d="M3 16 A9.500 9.500 0 0 1 11 1.500" fill="none" stroke="#c8382a" strokeWidth="2" /></svg>
          <span className="font-bold text-[12px] leading-none text-[#1c1c1c] relative">Ю</span>
        </div>
      </Slot>
      <Slot active><svg width="24" height="24" viewBox="0 0 24 24"><circle cx="12" cy="12" r="11.500" fill="#1c181c" stroke="#dcdcdc" strokeWidth="0.800" /><path d="M7 7 A6 6 0 0 1 18 9 A5 5 0 0 0 11 9 M5 17 A6 6 0 0 1 7 7 A5 5 0 0 0 12 15 M19 16 A6 6 0 0 1 8 18 A5 5 0 0 0 17 12" fill="#e8e8e8" stroke="#e8e8e8" strokeWidth="0.500" /></svg></Slot>
      <Slot active strong>
        <svg width="27" height="22" viewBox="0 0 24 20"><path d="M0 12 L8 6.500 L3.500 6.500 L12 1.500 C18 0.500 24 4 24 10.500 C24 16.500 19 19.500 14 19.500 C9.500 19.500 6.500 17 6.500 14 L3.500 14 Z" fill="#e8781a" /><circle cx="14.500" cy="10.500" r="6" fill="#ffffff" /><circle cx="14.500" cy="10.500" r="3.700" fill="#1f5a9c" /></svg>
      </Slot>
      <div className="flex-1" />
      <div className="flex items-center w-[180px] shrink-0 relative">
        <svg width="7" height="4" viewBox="0 0 7 4" className="ml-[4px] shrink-0"><path d="M3.500 0 L7 4 H0 Z" fill="#ffffff" /></svg>
        <svg width="14" height="16" viewBox="0 0 14 16" className="ml-[13px] shrink-0"><path d="M1 1 V15" stroke="#ffffff" strokeWidth="1.200" /><path d="M2 1.500 L10 3 V9 L2 8 Z" fill="#ffffff" /><circle cx="10.500" cy="11.500" r="3.500" fill="#c83030" /><path d="M9 10 L12 13 M12 10 L9 13" stroke="#fff" strokeWidth="0.800" /></svg>
        <svg width="13" height="12" viewBox="0 0 13 12" className="ml-[3px] shrink-0"><path d="M0 4 H3 L7 0.500 V11.500 L3 8 H0 Z" fill="#ffffff" /><path d="M9 3.500 A3 3 0 0 1 9 8.500 M11 2 A6 6 0 0 1 11 10" stroke="#ffffff" fill="none" strokeWidth="0.800" /></svg>
        <svg width="14" height="14" viewBox="0 0 14 14" className="ml-[7px] shrink-0"><rect x="4" y="3" width="9" height="7" fill="none" stroke="#ffffff" strokeWidth="1" /><path d="M8.500 10 V13 M5 13 H12" stroke="#fff" /><circle cx="2" cy="2" r="1.500" fill="none" stroke="#fff" strokeWidth="0.700" /><path d="M2 3.500 V9" stroke="#fff" strokeWidth="0.700" /></svg>
        <span className="ml-[8px] w-[26px] text-center text-[9.5px] leading-none">РУС</span>
        <div className="ml-[6px] w-[56px] text-center leading-none">
          <div className="text-[9.5px] mb-[6px]">11:56</div>
          <div className="text-[9.5px] whitespace-nowrap">19.10.2018</div>
        </div>
      </div>
    </div>
  );
}

export default function App() {
  return (
    <div className="w-[1280px] h-[720px] overflow-hidden flex flex-col bg-[#727272] [font-family:'DejaVu_Sans',sans-serif] blur-[0.3px]">
      <TitleBar />
      <TopHeader />
      <div className="flex flex-1 min-h-0">
        <div className="w-[1110px] shrink-0 flex flex-col">
          <div className="h-[571px] flex shrink-0">
            <Toolbar />
            <div className="w-px bg-[#5a5a5a] shrink-0" />
            <div className="flex-1 relative bg-[#393939] overflow-hidden">
              <Viewport />
              <span className="absolute left-[13px] top-[8px] text-[6.6px] leading-[8px] text-[#f0f0f0]">User Persp</span>
              <span className="absolute left-[46px] bottom-[4px] text-[6.8px] leading-[8px] text-[#f0f0f0]">(1) Cube</span>
            </div>
          </div>
          <div className="h-[19px] bg-[#6f6f6f] border-t border-[#888888] flex items-center pl-[14px] text-[6.8px] text-[#2a2a2a] shrink-0 whitespace-pre">Dx: 0.9413   Dy: 2.6432   Dz: 0.4155 (2.8364)</div>
          <Timeline />
        </div>
        <RightCol />
      </div>
      <Taskbar />
    </div>
  );
}
